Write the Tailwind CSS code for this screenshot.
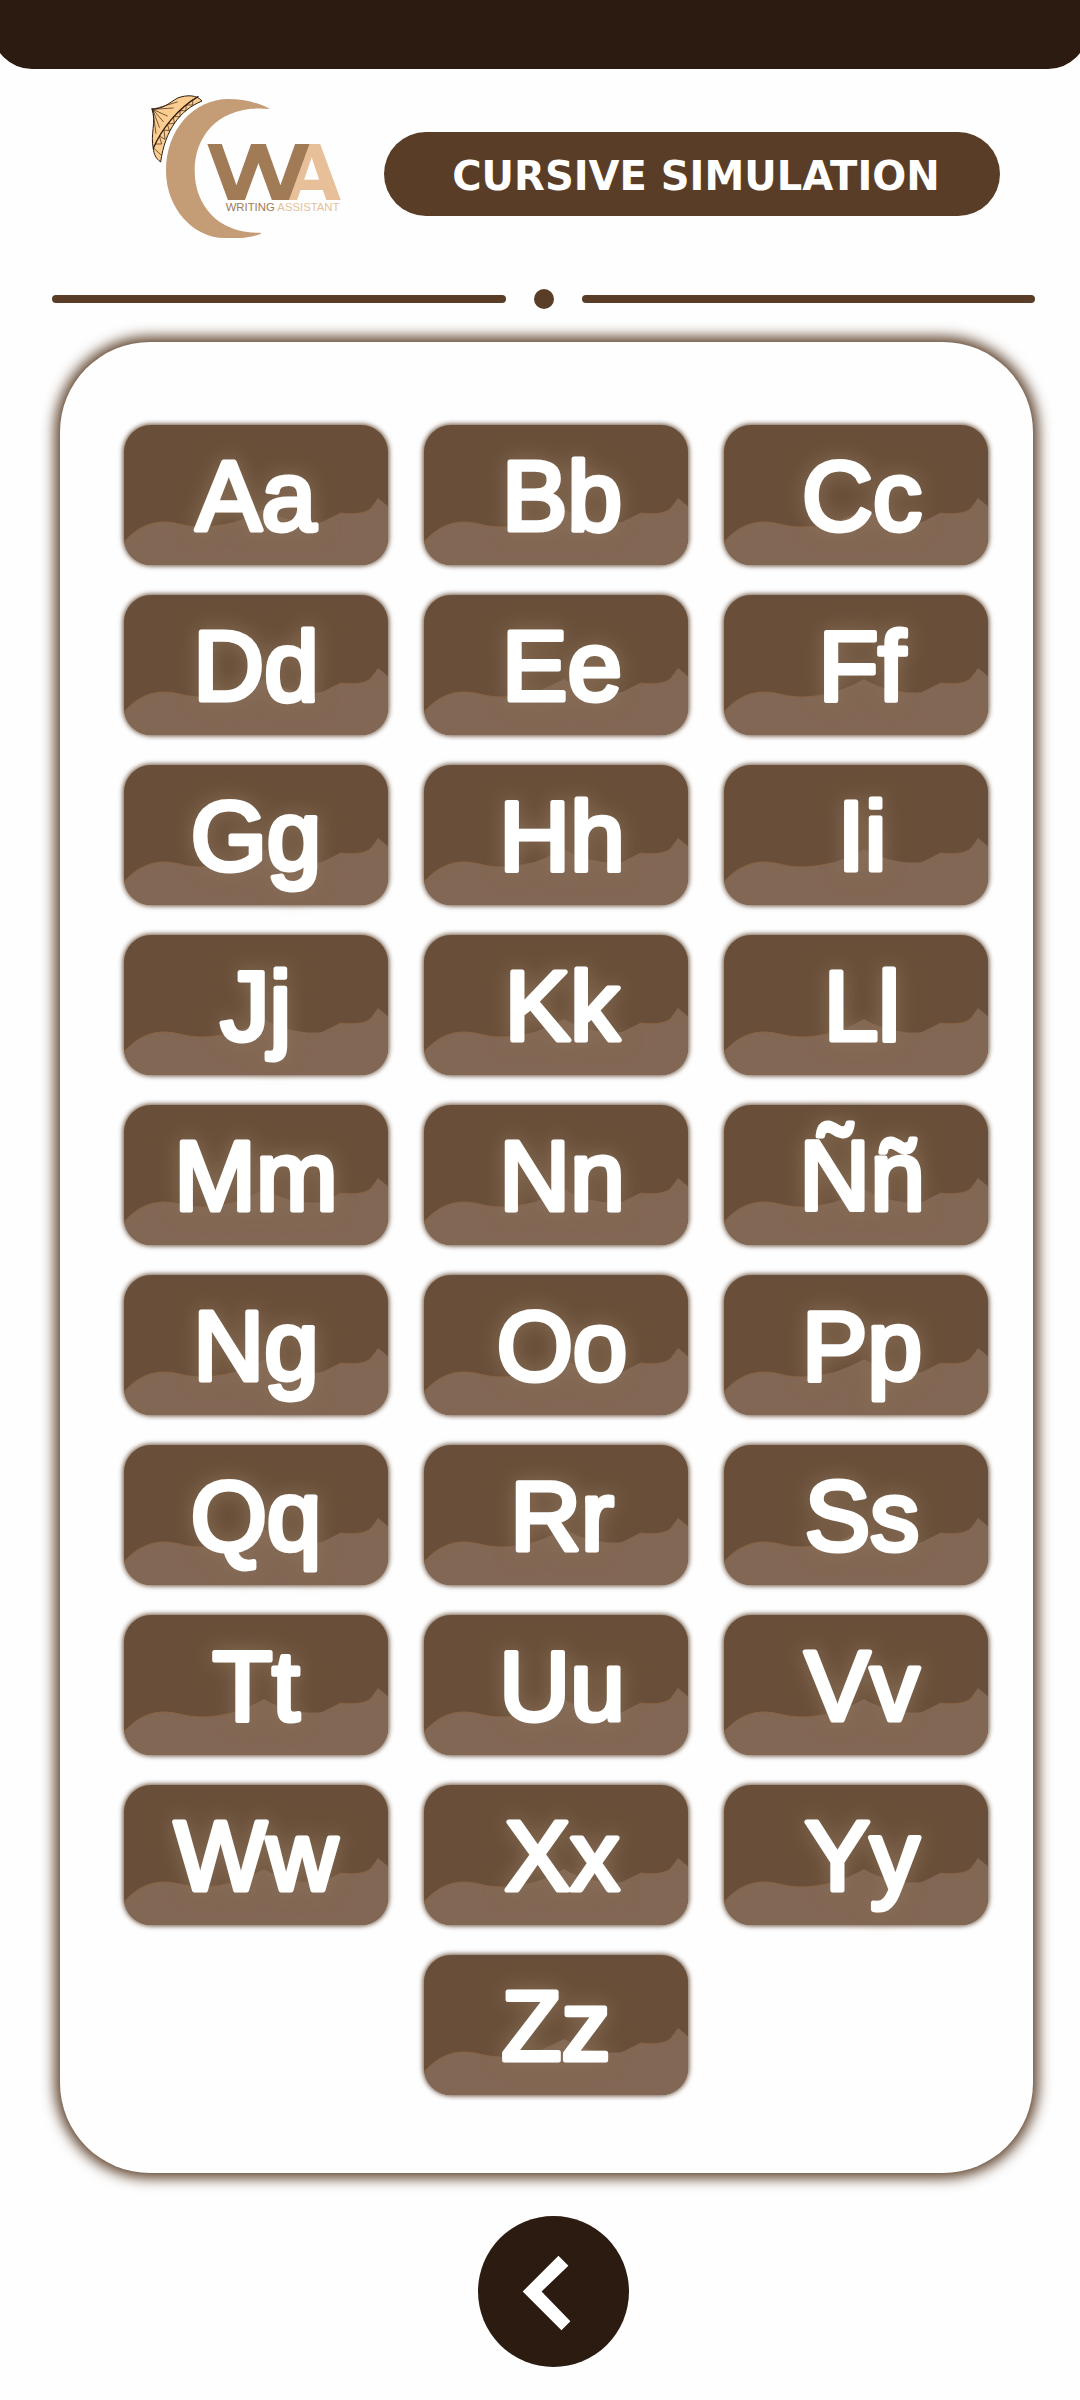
<!DOCTYPE html>
<html lang="en">
<head>
<meta charset="utf-8">
<meta name="viewport" content="width=device-width, initial-scale=1">
<title>Cursive Simulation</title>
<script src="https://cdn.jsdelivr.net/npm/@tailwindcss/browser@4"></script>
</head>
<body class="min-h-screen overflow-x-hidden bg-[#fefefe] font-['Liberation_Sans',Arial,sans-serif]">
  <div class="-mx-2 h-[69px] rounded-b-[40px] bg-[#2c1b11]"></div>

  <header class="flex items-start pt-[11px] pr-20 pl-[130px]">
    <svg class="h-[170px] w-[230px] shrink-0" viewBox="0 0 690 510" role="img" aria-label="Writing Assistant">
      <path fill="#c49c75" d="M420 87C385 68 340 57 296 57C190 57 108 150 108 272C108 385 190 474 284 474H322C348 474 374 468 392 462V458C270 462 194 380 194 272C194 160 275 72 420 87Z"/>
      <g stroke="#2f1c0e" stroke-linecap="round" stroke-linejoin="round">
        <path fill="#fccd90" stroke-width="3" d="M66 87C100 88 118 68 143 54C170 44 200 44 216 63C150 90 105 150 92 246C78 236 71 222 70 205C60 165 80 125 66 87Z"/>
        <path fill="none" stroke-width="4" d="M70 205C95 145 145 85 204 50"/>
        <path fill="none" stroke-width="2" d="M68 88L142 66M68 88L130 84M68 88L112 108M68 88L100 125M68 88L88 142M68 88L78 160M78 192L95 192L88 168L105 178L102 150L118 152L112 132L133 130L130 110L150 110L150 92L168 92L168 75L188 75L188 60M72 205L92 224"/>
      </g>
      <g class="font-['DejaVu_Sans',sans-serif] font-bold" font-size="228">
        <text x="457" y="360" fill="#e7c09a">A</text>
        <text x="231" y="360" fill="#a17a56">V</text>
        <text x="363" y="360" fill="#a17a56">V</text>
      </g>
      <g font-size="34">
        <text x="287" y="393" fill="#a17a56">WRITING</text>
        <text x="442" y="393" fill="#e7c09a">ASSISTANT</text>
      </g>
    </svg>
    <h1 class="mt-[52px] ml-6 flex h-[84px] flex-1 items-center justify-center rounded-full bg-[#5a3d26] pt-[3px] pl-2 font-['DejaVu_Sans',sans-serif] text-[40px] leading-none font-bold whitespace-nowrap text-white">CURSIVE SIMULATION</h1>
  </header>

  <div class="mt-[39px] flex items-center gap-7 pr-[45px] pl-[52px]">
    <div class="h-2 flex-1 rounded-full bg-[#5a3d26]"></div>
    <div class="size-5 rounded-full bg-[#5a3d26]"></div>
    <div class="h-2 flex-1 rounded-full bg-[#5a3d26]"></div>
  </div>

  <main class="mt-[33px] mr-[47px] ml-[60px] rounded-[90px] bg-[#fefefe] pt-[83px] pr-[45px] pb-[78px] pl-16 shadow-[0_0_14px_5px_#5a3d26]">
    <div id="letters" class="grid grid-cols-3 gap-x-9 gap-y-[30px]"></div>
  </main>

  <nav class="mt-[43px] flex justify-center pl-[26px] pb-8">
    <button type="button" aria-label="Back" class="size-[151px] rounded-full bg-[#2c1b11]">
      <svg viewBox="0 0 152 152" class="size-full"><path fill="#fff" d="M81 40L91 50L64 76L93 106L84 115L45 76Z"/></svg>
    </button>
  </nav>

  <template id="tile">
    <button type="button" class="relative h-[140px] rounded-[27px] bg-[#694f39] shadow-[0_0_5px_1px_#694f39]">
      <svg class="absolute inset-0 size-full rounded-[27px]" viewBox="0 0 264 140" preserveAspectRatio="none" aria-hidden="true">
        <path fill="#826754" d="M-1 118C12 103 26 97 40 97C54 97 60 102 78 102C100 102 120 95 140 84C160 96 184 99 198 97L216 88C232 90 246 88 249 80L254 73L265 82V142H-1Z"/>
        <path fill="none" stroke="#8a6443" d="M-1 118C12 103 26 97 40 97C54 97 60 102 78 102C88 102 98 100 108 98M216 88C232 90 246 88 249 80"/>
      </svg>
      <svg class="relative size-full overflow-visible drop-shadow-[0_0_10px_#8a7058]" viewBox="0 0 264 140">
        <text y="105" text-anchor="middle" font-size="98" fill="#fff" stroke="#fff" stroke-width="5" stroke-linejoin="round"></text>
      </svg>
    </button>
  </template>

  <script>
    const pairs = ["Aa","Bb","Cc","Dd","Ee","Ff","Gg","Hh","Ii","Jj","Kk","Ll","Mm","Nn","Ññ","Ng","Oo","Pp","Qq","Rr","Ss","Tt","Uu","Vv","Ww","Xx","Yy","Zz"];
    const grid = document.getElementById("letters");
    const tile = document.getElementById("tile");
    pairs.forEach((pair, i) => {
      const button = tile.content.cloneNode(true).firstElementChild;
      const label = button.querySelector("text");
      label.textContent = pair;
      label.setAttribute("x", i % 3 === 0 ? 132 : 138);
      if (pair === "Zz") button.classList.add("col-start-2");
      grid.append(button);
    });
  </script>
</body>
</html>
